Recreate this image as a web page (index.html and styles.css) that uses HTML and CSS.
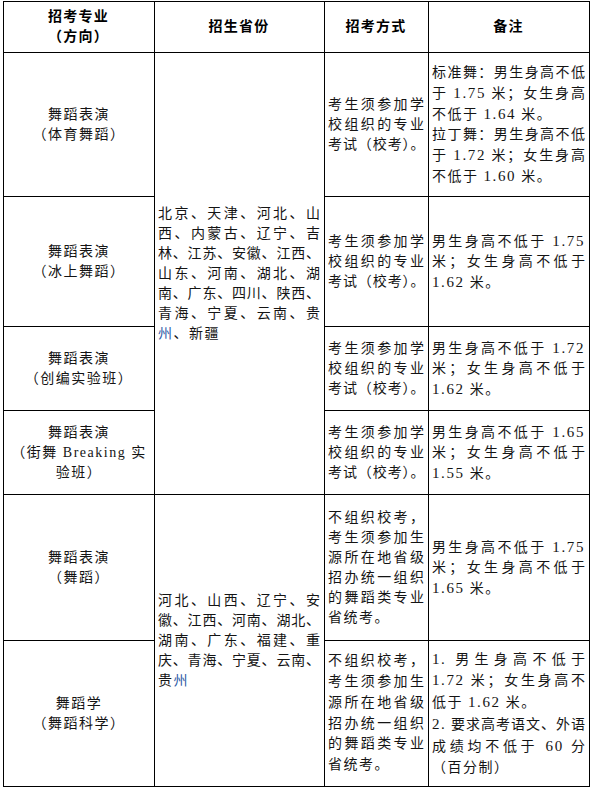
FILE: index.html
```html
<!DOCTYPE html>
<html lang="zh-CN">
<head>
<meta charset="utf-8">
<title>招考专业</title>
<link rel="stylesheet" href="styles.css">
</head>
<body>
<div class="sheet">
  <div class="cell hd"><span class="ln">招考专业</span><span class="ln">（方向）</span></div>
  <div class="cell hd"><span class="ln">招生省份</span></div>
  <div class="cell hd"><span class="ln">招考方式</span></div>
  <div class="cell hd"><span class="ln">备注</span></div>

  <div class="cell ctr"><span class="ln">舞蹈表演</span><span class="ln">（体育舞蹈）</span></div>
  <div class="cell prov1">
    <span class="ln j">北京、天津、河北、山</span>
    <span class="ln j">西、内蒙古、辽宁、吉</span>
    <span class="ln j">林、江苏、安徽、江西、</span>
    <span class="ln j">山东、河南、湖北、湖</span>
    <span class="ln j">南、广东、四川、陕西、</span>
    <span class="ln j">青海、宁夏、云南、贵</span>
    <span class="ln"><span class="hl">州</span>、新疆</span>
  </div>
  <div class="cell">
    <span class="ln j">考生须参加学</span>
    <span class="ln j">校组织的专业</span>
    <span class="ln j tight">考试（校考）。</span>
  </div>
  <div class="cell">
    <span class="ln j">标准舞：男生身高不低</span>
    <span class="ln j">于 <span class="num">1.75</span> 米；女生身高</span>
    <span class="ln">不低于 <span class="num">1.64</span> 米。</span>
    <span class="ln j">拉丁舞：男生身高不低</span>
    <span class="ln j">于 <span class="num">1.72</span> 米；女生身高</span>
    <span class="ln">不低于 <span class="num">1.60</span> 米。</span>
  </div>

  <div class="cell ctr"><span class="ln">舞蹈表演</span><span class="ln">（冰上舞蹈）</span></div>
  <div class="cell">
    <span class="ln j">考生须参加学</span>
    <span class="ln j">校组织的专业</span>
    <span class="ln j tight">考试（校考）。</span>
  </div>
  <div class="cell">
    <span class="ln j">男生身高不低于 <span class="num">1.75</span></span>
    <span class="ln j">米；女生身高不低于</span>
    <span class="ln"><span class="num">1.62</span> 米。</span>
  </div>

  <div class="cell ctr"><span class="ln">舞蹈表演</span><span class="ln">（创编实验班）</span></div>
  <div class="cell">
    <span class="ln j">考生须参加学</span>
    <span class="ln j">校组织的专业</span>
    <span class="ln j tight">考试（校考）。</span>
  </div>
  <div class="cell">
    <span class="ln j">男生身高不低于 <span class="num">1.72</span></span>
    <span class="ln j">米；女生身高不低于</span>
    <span class="ln"><span class="num">1.62</span> 米。</span>
  </div>

  <div class="cell ctr"><span class="ln">舞蹈表演</span><span class="ln">（街舞 Breaking 实</span><span class="ln">验班）</span></div>
  <div class="cell">
    <span class="ln j">考生须参加学</span>
    <span class="ln j">校组织的专业</span>
    <span class="ln j tight">考试（校考）。</span>
  </div>
  <div class="cell">
    <span class="ln j">男生身高不低于 <span class="num">1.65</span></span>
    <span class="ln j">米；女生身高不低于</span>
    <span class="ln"><span class="num">1.55</span> 米。</span>
  </div>

  <div class="cell ctr"><span class="ln">舞蹈表演</span><span class="ln">（舞蹈）</span></div>
  <div class="cell prov2">
    <span class="ln j">河北、山西、辽宁、安</span>
    <span class="ln j">徽、江西、河南、湖北、</span>
    <span class="ln j">湖南、广东、福建、重</span>
    <span class="ln j">庆、青海、宁夏、云南、</span>
    <span class="ln">贵<span class="hl">州</span></span>
  </div>
  <div class="cell">
    <span class="ln j">不组织校考，</span>
    <span class="ln j">考生须参加生</span>
    <span class="ln j">源所在地省级</span>
    <span class="ln j">招办统一组织</span>
    <span class="ln j">的舞蹈类专业</span>
    <span class="ln">省统考。</span>
  </div>
  <div class="cell">
    <span class="ln j">男生身高不低于 <span class="num">1.75</span></span>
    <span class="ln j">米；女生身高不低于</span>
    <span class="ln"><span class="num">1.65</span> 米。</span>
  </div>

  <div class="cell ctr"><span class="ln">舞蹈学</span><span class="ln">（舞蹈科学）</span></div>
  <div class="cell loose">
    <span class="ln j">不组织校考，</span>
    <span class="ln j">考生须参加生</span>
    <span class="ln j">源所在地省级</span>
    <span class="ln j">招办统一组织</span>
    <span class="ln j">的舞蹈类专业</span>
    <span class="ln">省统考。</span>
  </div>
  <div class="cell loose">
    <span class="ln j"><span class="num">1.</span> 男生身高不低于</span>
    <span class="ln j"><span class="num">1.72</span> 米；女生身高不</span>
    <span class="ln">低于 <span class="num">1.62</span> 米。</span>
    <span class="ln j"><span class="num">2.</span> 要求高考语文、外语</span>
    <span class="ln j">成绩均不低于 <span class="num">60</span> 分</span>
    <span class="ln">（百分制）</span>
  </div>
</div>
</body>
</html>
```
FILE: styles.css
```css
html, body {
  margin: 0;
  padding: 0;
  background: #ffffff;
}

.sheet {
  box-sizing: border-box;
  margin: 1px 0 0 3px;
  width: 587px;
  display: grid;
  grid-template-columns: 150px 169px 103px 160px;
  grid-template-rows: 50px 143px 129px 83px 83px 145px 145px;
  gap: 1px;
  padding: 1px;
  background: #000000;
  font-family: "Liberation Serif", "Noto Sans CJK SC", serif;
  font-size: 14px;
  line-height: 20px;
  color: #141414;
}

.cell {
  background: #ffffff;
  display: flex;
  flex-direction: column;
  justify-content: center;
  padding: 0 4px 0 3px;
  min-width: 0;
}

.ln {
  display: block;
  white-space: nowrap;
  letter-spacing: 1.5px;
}

.j {
  text-align: justify;
  text-align-last: justify;
  letter-spacing: 0;
}

.tight {
  letter-spacing: -0.5px;
}

.num {
  font-size: 15px;
  letter-spacing: 1.6px;
}

.hd {
  text-align: center;
  font-weight: 700;
  color: #000000;
}

.hd .ln {
  letter-spacing: 1.2px;
}

.ctr {
  text-align: center;
  padding: 0;
}

.prov1 {
  grid-column: 2;
  grid-row: 2 / span 4;
}

.prov2 {
  grid-column: 2;
  grid-row: 6 / span 2;
}

.loose {
  line-height: 20.8px;
}

.hl {
  color: #2d5aa6;
}
```
